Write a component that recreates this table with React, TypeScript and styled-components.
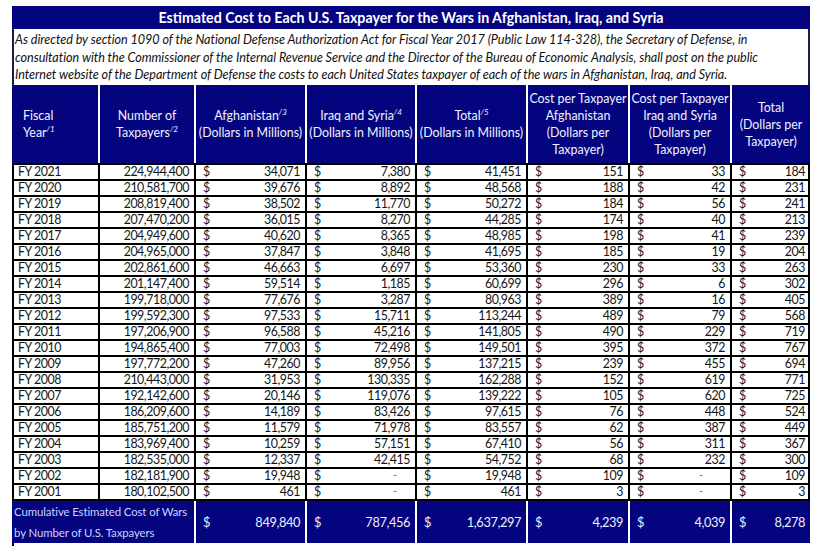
import styled, { createGlobalStyle } from 'styled-components';

const navy = '#04047f';
const cols = '86px 96px 111px 110px 111px 102px 102px 78px';

const GlobalStyle = createGlobalStyle`
  body {
    margin: 0;
    background: #fff;
    font-family: Lato, 'Open Sans', sans-serif;
  }
`;

const Page = styled.div`
  padding: 6px 0 0 12px;
`;

const Sheet = styled.div`
  width: 798px;
`;

const Title = styled.div`
  height: 23px;
  background: ${navy};
  color: #fff;
  font-weight: 700;
  font-size: 14.2px;
  display: flex;
  align-items: center;
  justify-content: center;
`;

const Note = styled.div`
  box-sizing: border-box;
  height: 56px;
  border-left: 2px solid #1c1c4a;
  border-right: 2px solid #1c1c4a;
  padding: 2px 0 0 1px;
  font-style: italic;
  font-size: 12.6px;
  letter-spacing: -0.05px;
  line-height: 17.5px;
  color: #111;
  white-space: nowrap;
`;

const HeaderRow = styled.div`
  box-sizing: border-box;
  display: grid;
  grid-template-columns: ${cols};
  height: 80px;
  padding-left: 2px;
  background: ${navy};
  border-bottom: 2px solid #000;
`;

const HeadCell = styled.div<{ $left?: boolean }>`
  border-right: 2px solid #fff;
  &:last-child {
    border-right: none;
  }
  display: flex;
  align-items: center;
  justify-content: ${(p) => (p.$left ? 'flex-start' : 'center')};
  padding-left: ${(p) => (p.$left ? '9px' : '0')};
  text-align: ${(p) => (p.$left ? 'left' : 'center')};
  color: #f2f2ff;
  font-size: 12.4px;
  line-height: 17px;
`;

const Sup = styled.sup`
  font-size: 8px;
  font-style: italic;
  vertical-align: 5px;
  line-height: 0;
`;

const Row = styled.div`
  display: grid;
  grid-template-columns: ${cols};
  height: 16px;
  border-left: 2px solid #000;
  border-right: 2px solid #000;
`;

const Cell = styled.div<{ $align?: 'left' | 'right' }>`
  box-sizing: border-box;
  border-right: 2px solid #000;
  border-bottom: 2px solid #000;
  &:last-child {
    border-right: none;
  }
  display: flex;
  align-items: center;
  justify-content: ${(p) => (p.$align === 'left' ? 'flex-start' : 'flex-end')};
  padding: 0 5px 0 4px;
  font-size: 12.4px;
  letter-spacing: -0.45px;
  line-height: 14px;
  color: #151515;
`;

const Money = styled(Cell)`
  justify-content: space-between;
  padding: 0 5px 0 7px;
`;

const Dash = styled.span<{ $gap: number }>`
  color: #888;
  margin-right: ${(p) => p.$gap}px;
`;

const Footer = styled.div`
  display: grid;
  grid-template-columns: ${cols};
  height: 42px;
  padding-left: 2px;
  background: ${navy};
`;

const FootLabel = styled.div`
  grid-column: span 2;
  border-right: 2px solid #fff;
  display: flex;
  align-items: center;
  color: #c9d2ff;
  font-size: 11.4px;
  letter-spacing: -0.1px;
  line-height: 21px;
  white-space: nowrap;
`;

const FootCell = styled.div`
  border-right: 2px solid #fff;
  &:last-child {
    border-right: none;
  }
  display: flex;
  align-items: center;
  justify-content: space-between;
  padding: 0 5px 0 7px;
  color: #eef;
  font-size: 12.8px;
  letter-spacing: -0.4px;
`;

const Tail = styled.div`
  height: 3px;
  border-left: 2px solid #000;
`;

type Line = [string, string, string, string, string, string, string, string];

const rows: Line[] = [
  ['FY 2021', '224,944,400', '34,071', '7,380', '41,451', '151', '33', '184'],
  ['FY 2020', '210,581,700', '39,676', '8,892', '48,568', '188', '42', '231'],
  ['FY 2019', '208,819,400', '38,502', '11,770', '50,272', '184', '56', '241'],
  ['FY 2018', '207,470,200', '36,015', '8,270', '44,285', '174', '40', '213'],
  ['FY 2017', '204,949,600', '40,620', '8,365', '48,985', '198', '41', '239'],
  ['FY 2016', '204,965,000', '37,847', '3,848', '41,695', '185', '19', '204'],
  ['FY 2015', '202,861,600', '46,663', '6,697', '53,360', '230', '33', '263'],
  ['FY 2014', '201,147,400', '59,514', '1,185', '60,699', '296', '6', '302'],
  ['FY 2013', '199,718,000', '77,676', '3,287', '80,963', '389', '16', '405'],
  ['FY 2012', '199,592,300', '97,533', '15,711', '113,244', '489', '79', '568'],
  ['FY 2011', '197,206,900', '96,588', '45,216', '141,805', '490', '229', '719'],
  ['FY 2010', '194,865,400', '77,003', '72,498', '149,501', '395', '372', '767'],
  ['FY 2009', '197,772,200', '47,260', '89,956', '137,215', '239', '455', '694'],
  ['FY 2008', '210,443,000', '31,953', '130,335', '162,288', '152', '619', '771'],
  ['FY 2007', '192,142,600', '20,146', '119,076', '139,222', '105', '620', '725'],
  ['FY 2006', '186,209,600', '14,189', '83,426', '97,615', '76', '448', '524'],
  ['FY 2005', '185,751,200', '11,579', '71,978', '83,557', '62', '387', '449'],
  ['FY 2004', '183,969,400', '10,259', '57,151', '67,410', '56', '311', '367'],
  ['FY 2003', '182,535,000', '12,337', '42,415', '54,752', '68', '232', '300'],
  ['FY 2002', '182,181,900', '19,948', '-', '19,948', '109', '-', '109'],
  ['FY 2001', '180,102,500', '461', '-', '461', '3', '-', '3'],
];

const totals = ['849,840', '787,456', '1,637,297', '4,239', '4,039', '8,278'];

const dashGap = [0, 13, 0, 0, 22, 0];

export default function App() {
  return (
    <Page>
      <GlobalStyle />
      <Sheet>
        <Title>Estimated Cost to Each U.S. Taxpayer for the Wars in Afghanistan, Iraq, and Syria</Title>
        <Note>
          As directed by section 1090 of the National Defense Authorization Act for Fiscal Year 2017 (Public Law
          114-328), the Secretary of Defense, in
          <br />
          consultation with the Commissioner of the Internal Revenue Service and the Director of the Bureau of
          Economic Analysis, shall post on the public
          <br />
          Internet website of the Department of Defense the costs to each United States taxpayer of each of the wars
          in Afghanistan, Iraq, and Syria.
        </Note>
        <HeaderRow>
          <HeadCell $left>
            <div>
              Fiscal
              <br />
              Year<Sup>/1</Sup>
            </div>
          </HeadCell>
          <HeadCell>
            <div>
              Number of
              <br />
              Taxpayers<Sup>/2</Sup>
            </div>
          </HeadCell>
          <HeadCell>
            <div>
              Afghanistan<Sup>/3</Sup>
              <br />
              (Dollars in Millions)
            </div>
          </HeadCell>
          <HeadCell>
            <div>
              Iraq and Syria<Sup>/4</Sup>
              <br />
              (Dollars in Millions)
            </div>
          </HeadCell>
          <HeadCell>
            <div>
              Total<Sup>/5</Sup>
              <br />
              (Dollars in Millions)
            </div>
          </HeadCell>
          <HeadCell>
            <div>
              Cost per Taxpayer
              <br />
              Afghanistan
              <br />
              (Dollars per
              <br />
              Taxpayer)
            </div>
          </HeadCell>
          <HeadCell>
            <div>
              Cost per Taxpayer
              <br />
              Iraq and Syria
              <br />
              (Dollars per
              <br />
              Taxpayer)
            </div>
          </HeadCell>
          <HeadCell>
            <div>
              Total
              <br />
              (Dollars per
              <br />
              Taxpayer)
            </div>
          </HeadCell>
        </HeaderRow>
        {rows.map((r) => (
          <Row key={r[0]}>
            <Cell $align="left">{r[0]}</Cell>
            <Cell>{r[1]}</Cell>
            {r.slice(2).map((v, i) => (
              <Money key={i}>
                <span>$</span>
                {v === '-' ? <Dash $gap={dashGap[i]}>-</Dash> : <span>{v}</span>}
              </Money>
            ))}
          </Row>
        ))}
        <Footer>
          <FootLabel>
            <div>
              Cumulative Estimated Cost of Wars
              <br />
              by Number of U.S. Taxpayers
            </div>
          </FootLabel>
          {totals.map((t) => (
            <FootCell key={t}>
              <span>$</span>
              <span>{t}</span>
            </FootCell>
          ))}
        </Footer>
        <Tail />
      </Sheet>
    </Page>
  );
}
